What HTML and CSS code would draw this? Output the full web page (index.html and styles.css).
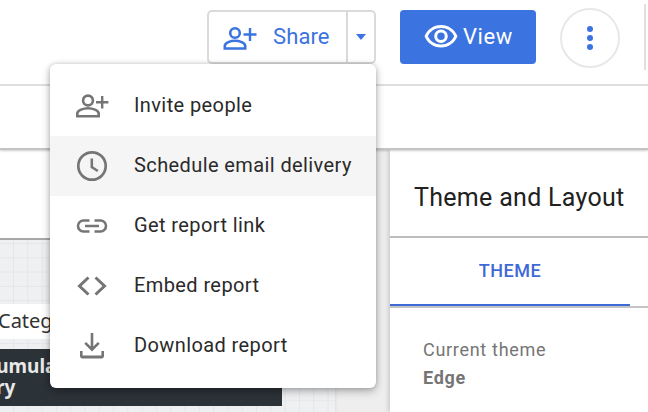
FILE: index.html
```html
<!DOCTYPE html>
<html lang="en">
<head>
<meta charset="utf-8">
<title>Share menu</title>
<link rel="stylesheet" href="styles.css">
</head>
<body>
<div class="app">
  <header class="topbar">
    <div class="share">
      <button class="share-main">
        <svg class="ic-share" viewBox="0 0 36 36"><circle cx="13" cy="14" r="4.800" fill="none" stroke="#3b73e0" stroke-width="2.600"/><path fill="none" stroke="#3b73e0" stroke-width="2.600" d="M2.800 29.500v-2.500c0-3.300 6-5.200 10.200-5.200s10.200 1.900 10.200 5.200v2.500z"/><path fill="#3b73e0" d="M26.800 22v-5.300h-5.300v-2.400h5.300V9h2.400v5.300h5.300v2.400h-5.300V22z"/></svg>
        <span class="share-label">Share</span>
      </button>
      <button class="share-caret"><i class="caret"></i></button>
    </div>
    <button class="view">
      <svg class="ic-eye" viewBox="0 0 24 24"><path fill="#fff" d="M12 6a9.770 9.770 0 0 1 8.820 5.500A9.770 9.770 0 0 1 12 17a9.770 9.770 0 0 1-8.820-5.500A9.770 9.770 0 0 1 12 6m0-2C7 4 2.730 7.110 1 11.500 2.730 15.890 7 19 12 19s9.270-3.110 11-7.500C21.270 7.110 17 4 12 4zm0 5a2.500 2.500 0 0 1 0 5 2.500 2.500 0 0 1 0-5m0-2c-2.480 0-4.500 2.020-4.500 4.500S9.520 16 12 16s4.500-2.020 4.500-4.500S14.480 7 12 7z"/></svg>
      <span class="view-label">View</span>
    </button>
    <button class="more"><i></i><i></i><i></i></button>
    <div class="vdiv"></div>
  </header>
  <div class="toolbar"></div>
  <main class="workspace">
    <section class="canvas">
      <div class="sheet">
        <div class="sheet-head"></div>
        <div class="sheet-grid">
          <div class="chip">Category</div>
          <div class="darkhead"><div class="darktext">Cumulative<br>ry</div></div>
        </div>
      </div>
    </section>
    <aside class="panel">
      <h2 class="panel-title">Theme and Layout</h2>
      <div class="tabs"><div class="tab">THEME</div></div>
      <div class="theme-info">
        <div class="theme-label">Current theme</div>
        <div class="theme-name">Edge</div>
      </div>
    </aside>
  </main>
  <nav class="menu">
    <div class="item">
      <svg viewBox="0 0 36 36"><circle cx="14" cy="12.500" r="4.900" fill="none" stroke="#757575" stroke-width="2.600"/><path fill="none" stroke="#757575" stroke-width="2.600" d="M3.300 28.200v-2.700c0-3.300 6.300-5.300 10.700-5.300s10.700 2 10.700 5.300v2.700z"/><path fill="#757575" d="M27 20.500v-5h-5v-2.400h5V8h2.400v5.100h5v2.400h-5v5z"/></svg>
      <span>Invite people</span>
    </div>
    <div class="item active">
      <svg viewBox="0 0 36 36"><circle cx="18" cy="18" r="13.700" fill="none" stroke="#757575" stroke-width="2.700"/><path fill="none" stroke="#757575" stroke-width="2.500" d="M17.800 10.500v8.500l6 4"/></svg>
      <span>Schedule email delivery</span>
    </div>
    <div class="item">
      <svg viewBox="0 0 36 36"><path fill="none" stroke="#757575" stroke-width="2.600" d="M15.500 12.500h-6a5.500 5.500 0 0 0 0 11h6M20.500 12.500h6a5.500 5.500 0 0 1 0 11h-6M11 18h14"/></svg>
      <span>Get report link</span>
    </div>
    <div class="item">
      <svg viewBox="0 0 36 36"><path fill="none" stroke="#757575" stroke-width="3" d="M14.500 9.500 5.500 18l9 8.500M21.500 9.500l9 8.500-9 8.500"/></svg>
      <span>Embed report</span>
    </div>
    <div class="item">
      <svg viewBox="0 0 36 36"><path fill="#757575" d="M16.700 5h2.600v13.500l4.600-4.600 1.800 1.800-7.700 7.700-7.700-7.700 1.800-1.800 4.600 4.600zM6 23h2.600v4.400h18.800V23H30v5c0 1.400-1 2.400-2.400 2.400H8.400C7 30.400 6 29.400 6 28z"/></svg>
      <span>Download report</span>
    </div>
  </nav>
</div>
</body>
</html>
```

FILE: styles.css
```css
* { box-sizing: border-box; }
html, body { margin: 0; padding: 0; }
body { width: 648px; height: 412px; overflow: hidden; font-family: Roboto, "Liberation Sans", sans-serif; background: #fff; }
button { font-family: inherit; padding: 0; margin: 0; cursor: pointer; }
.app { position: relative; width: 648px; height: 412px; display: flex; flex-direction: column; overflow: hidden; }
.topbar { height: 86px; flex: none; display: flex; align-items: flex-start; padding: 10px 0 0 207px; background: #fff; border-bottom: 2px solid #e0e0e0; }
.share { width: 169px; height: 54px; display: flex; border: 2px solid #dadadd; border-radius: 5px; background: #fff; }
.share-main { width: 139px; border: 0; border-right: 2px solid #dadadd; background: none; display: flex; align-items: center; padding-left: 13px; gap: 15px; color: #3b73e0; font-size: 22px; letter-spacing: .1px; }
.share-label { padding-bottom: 2px; }
.ic-share { width: 36px; height: 36px; flex: none; }
.share-caret { flex: 1; border: 0; background: none; display: flex; align-items: center; justify-content: center; }
.caret { width: 0; height: 0; border-style: solid; border-color: #3b73e0 transparent transparent; border-width: 6px 5.500px 0; }
.view { margin-left: 24px; width: 136px; height: 54px; border: 0; border-radius: 4px; background: #3b73e0; color: #fff; display: flex; align-items: center; padding-left: 23px; gap: 4px; font-size: 22px; font-weight: 400; letter-spacing: .6px; }
.view-label { padding-bottom: 2px; }
.ic-eye { width: 36px; height: 36px; flex: none; }
.more { margin: -2px 0 0 24px; width: 60px; height: 60px; border: 2px solid #e8e8e8; border-radius: 50%; background: #fff; display: flex; flex-direction: column; align-items: center; justify-content: center; gap: 2.700px; }
.more i { width: 6px; height: 6px; border-radius: 50%; background: #3b73e0; }
.vdiv { margin: -6px 0 0 24px; width: 2px; height: 66px; background: #e0e0e0; }
.toolbar { height: 64px; flex: none; background: #fff; border-bottom: 2px solid #c4c4c4; box-shadow: 0 1px 2px rgba(0,0,0,.2); position: relative; z-index: 2; }
.workspace { flex: 1; display: flex; min-height: 0; }
.canvas { width: 390px; flex: none; background: #eeeeee; padding-right: 55px; }
.sheet { height: 100%; display: flex; flex-direction: column; box-shadow: 0 0 3px rgba(0,0,0,.12); }
.sheet-head { height: 90px; flex: none; background: #fff; border-bottom: 2px solid #a8a8a8; }
.sheet-grid { flex: 1; padding-top: 64px; background-color: #eff0f2; background-image: linear-gradient(#e5e6e9 1px, transparent 1px), linear-gradient(90deg, #e5e6e9 1px, transparent 1px); background-size: 14.300px 14.300px; background-position: 13px 3px; }
.chip { width: 60px; height: 35px; background: #fff; font-size: 20px; line-height: 34px; color: #333; white-space: nowrap; overflow: hidden; font-family: "Noto Sans", sans-serif; text-indent: -2px; }
.darkhead { margin-top: 10px; width: 282px; height: 57px; background: #2b3238; color: #e8e8e8; font-size: 19px; font-weight: 700; line-height: 21px; padding-top: 7px; font-family: "Noto Sans", sans-serif; overflow: hidden; }
.darktext { margin-left: -4px; text-indent: -12px; }
.panel { flex: 1; background: #fff; box-shadow: -2px 0 4px rgba(0,0,0,.14); position: relative; z-index: 1; }
.panel-title { margin: 0; height: 88px; padding: 10px 0 0 24px; font-weight: 400; font-size: 25px; letter-spacing: .3px; line-height: 76px; color: #212121; border-bottom: 2px solid #bdbdbd; }
.tabs { height: 70px; border-bottom: 2px solid #c4c4c4; }
.tab { width: 240px; height: 68px; border-bottom: 2px solid #3f69d6; text-align: center; line-height: 66px; font-size: 18px; letter-spacing: .5px; font-weight: 500; color: #3f69d6; }
.theme-info { padding: 28px 0 0 33px; letter-spacing: .7px; }
.theme-label { font-size: 18px; line-height: 28px; color: #757575; }
.theme-name { font-size: 18px; line-height: 28px; font-weight: 700; color: #757575; }
.menu { position: absolute; left: 50px; top: 64px; width: 326px; height: 324px; padding-top: 12px; background: #fff; border-radius: 6px; box-shadow: 0 3px 8px rgba(0,0,0,.3), 0 0 4px rgba(0,0,0,.15); z-index: 5; }
.item { height: 60px; display: flex; align-items: center; padding-left: 24px; gap: 24px; font-size: 20px; letter-spacing: .4px; color: #2a2a2a; white-space: nowrap; }
.item span { padding-bottom: 2px; }
.item svg { width: 36px; height: 36px; flex: none; }
.item.active { background: #f5f5f5; }
```
